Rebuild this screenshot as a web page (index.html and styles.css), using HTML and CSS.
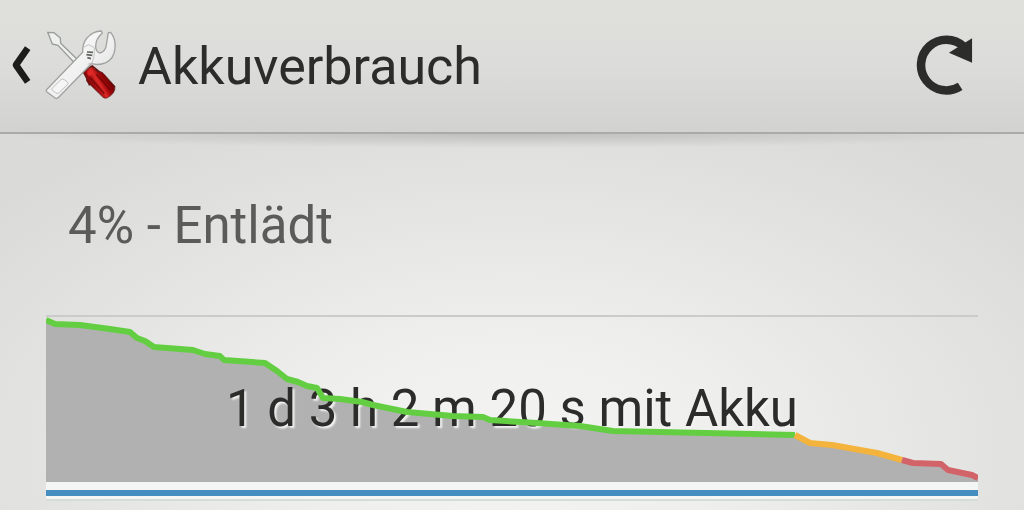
FILE: index.html
```html
<!DOCTYPE html>
<html lang="de">
<head>
<meta charset="utf-8">
<meta name="viewport" content="width=device-width, initial-scale=1">
<title>Akkuverbrauch</title>
<link rel="stylesheet" href="styles.css">
</head>
<body>
<header class="bar">
  <button class="up" type="button" aria-label="Zurück">
    <svg class="up-arrow" viewBox="0 0 60 120" aria-hidden="true"><path d="M51 14 19 60l32 46" fill="none" stroke="#1c1d1b" stroke-width="18" stroke-linejoin="round"/></svg>
    <svg class="tools" viewBox="130 25 222 222" aria-hidden="true">
      <defs>
        <linearGradient id="metal" x1="0" y1="0" x2="1" y2="1"><stop offset="0" stop-color="#fff"/><stop offset=".55" stop-color="#f0f0f0"/><stop offset="1" stop-color="#d5d7d7"/></linearGradient>
        <linearGradient id="grip" gradientUnits="userSpaceOnUse" x1="258" y1="205" x2="325" y2="165"><stop offset="0" stop-color="#4c0705"/><stop offset=".3" stop-color="#9b0b0c"/><stop offset=".5" stop-color="#dc2a27"/><stop offset=".68" stop-color="#a00708"/><stop offset="1" stop-color="#5c0304"/></linearGradient>
      </defs>
      <path d="M141 38 160 39l19 16 1 16 51 49-9 10-50-53-17-4z" fill="#eef0ee" stroke="#999c99" stroke-width="4" stroke-linejoin="round"/>
      <path d="M245 154 275 136l22 18 10 5-42 40-7-18z" fill="#631010"/>
      <path d="M248 160q14-18 30-17l12 14q12-3 19 5l34 38q2 22-24 35-8 2-13-3l-43-42q-8-5-5-16z" fill="url(#grip)" stroke="#5b2a2a" stroke-width="2"/>
      <path d="m269 174 42 48M287 164l42 47" stroke="#6a0507" stroke-width="5" opacity=".7"/>
      <circle cx="268" cy="160" r="8" fill="#df2726"/>
      <path d="M139 209 246 98q-1-27 13-43 17-20 43-21l3 6q-20 18-20 39 0 17 12 21 13-2 19-18l7-43 7-1q16 20 13 48-3 31-27 43-21 9-44 3L174 233q-7 7-14 0l-22-17q-3-3 1-7z" fill="url(#metal)" stroke="#a0a3a0" stroke-width="4" stroke-linejoin="round"/>
      <path d="m155 205 26-25q5-4 10 0l9 7q4 4 0 8l-26 25q-5 3-9-1l-10-7q-4-3 0-7z" fill="#f4f5f4" stroke="#bfc1bf" stroke-width="3"/>
      <path d="m250 82 14-7 17 9q2 25-6 45l-14 5" fill="none" stroke="#c1c4c1" stroke-width="3"/>
      <path d="m259 97 18 1m-20 7 18 2m-15 7 11 3" stroke="#626562" stroke-width="5"/>
    </svg>
  </button>
  <h1 class="title">Akkuverbrauch</h1>
  <button class="refresh" type="button" aria-label="Aktualisieren">
    <svg class="refresh-icon" viewBox="44 40 180 188" aria-hidden="true"><path d="M194 78A77 77 0 1 0 183 199" fill="none" stroke="#2c2d2b" stroke-width="26"/><path d="M219 53v74l-70-30z" fill="#2c2d2b"/></svg>
  </button>
</header>
<main class="content">
  <p class="status">4% - Entlädt</p>
  <section class="history" aria-label="Akkuverlauf">
    <div class="chart">
      <svg class="layer" viewBox="0 0 932 165" aria-hidden="true"><path fill="#b1b1b1" d="M0 165V2L9 6 34 8 64 12 84 15 91 21 99 24 108 30 147 33 159 37 174 39 178 43 219 46 231 54 241 62 252 65 261 69 271 71 277 81 294 82 316 85 327 88 361 95 407 99 437 100 444 103 491 106 534 109 567 114 614 115 749 118 764 126 786 128 831 136 856 143 867 146 895 147 902 153 926 158 932 161V165z"/></svg>
      <p class="duration">1 d 3 h 2 m 20 s mit Akku</p>
      <svg class="layer" viewBox="0 0 932 165" aria-hidden="true">
        <g fill="none" stroke-width="6" stroke-linejoin="round">
          <path stroke="#64ce42" d="M0 3 9 7 34 8 64 12 84 15 91 21 99 24 108 30 147 33 159 37 174 39 178 43 219 46 231 54 241 62 252 65 261 69 271 71 277 81 294 82 316 85 327 88 361 95 407 99 437 100 444 103 491 106 534 109 567 114 614 115 749 118"/>
          <path stroke="#f4b33c" d="M749 118 764 126 786 128 831 136 856 143"/>
          <path stroke="#d26469" d="M856 143 867 146 895 147 902 153 926 158 932 161"/>
        </g>
      </svg>
    </div>
    <div class="track"><div class="running"></div></div>
  </section>
</main>
</body>
</html>
```
FILE: styles.css
```css
* { box-sizing: border-box; }
body {
  margin: 0;
  min-height: 100vh;
  display: flex;
  flex-direction: column;
  overflow: hidden;
  font-family: Roboto, "Noto Sans", sans-serif;
  font-size: 51px;
  line-height: 60px;
  color: #2c2d2b;
  background: #dcddda;
}
h1, p { margin: 0; font-size: inherit; font-weight: 400; }
button { padding: 0; border: 0; background: none; cursor: pointer; }
svg { display: block; }
.bar {
  display: flex;
  align-items: center;
  gap: 20px;
  padding: 28px 50px 30px 8px;
  border-bottom: 2px solid #aaaba8;
  background: linear-gradient(#dfe0db, #dcddda 50%, #d2d3d1);
}
.up { display: flex; align-items: center; gap: 12px; }
.up-arrow { width: 24px; height: 44px; }
.tools { width: 74px; height: 74px; }
.title { flex: 1; padding-top: 4px; font-size: 52px; }
.refresh-icon { width: 60px; height: 62px; }
.content {
  flex: 1;
  padding: 62px 46px 8px;
  background:
    radial-gradient(ellipse 50% 14px at 50% 0, #999a9777, #99999900),
    radial-gradient(ellipse 66% 100% at 50% 84%, #f4f5f3, #eff0ed 30%, #e3e4e1 70%, #d9dad700),
    #dadbd8;
}
.status { padding-left: 22px; color: #5b5c59; }
.history { margin-top: 59px; border-top: 2px solid #cbccc9; }
.chart { display: grid; }
.layer, .duration { grid-area: 1 / 1; }
.layer { width: 100%; height: auto; }
.duration {
  align-self: center;
  padding-top: 18px;
  text-align: center;
  text-shadow: 2px 2px 2px #f3f3f3;
}
.track {
  padding: 8px 0 3px;
  border-bottom: 2px solid #d6dcda;
  background: #f3f6f4;
}
.running { height: 6px; background: #448fc0; }
```
